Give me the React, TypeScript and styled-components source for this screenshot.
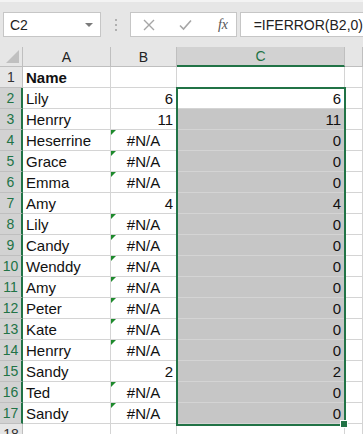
import React from "react";
import styled, { createGlobalStyle } from "styled-components";

const GlobalStyle = createGlobalStyle`
  html, body {
    margin: 0;
    padding: 0;
    background: #ffffff;
    overflow: hidden;
  }
  body {
    font-family: "Liberation Sans", Arial, sans-serif;
  }
`;

const green = "#217346";

const Window = styled.div`
  width: 363px;
  height: 434px;
  overflow: hidden;
  background: #ffffff;
`;

const FormulaBar = styled.div`
  height: 47px;
  box-sizing: border-box;
  background: #e6e6e6;
  border-top: 2px solid #f3f3f3;
  display: flex;
  align-items: flex-start;
  padding: 10px 0 0 3px;
`;

const NameBox = styled.div`
  width: 102px;
  height: 25px;
  box-sizing: border-box;
  background: #fff;
  border: 1px solid #c6c6c6;
  display: flex;
  align-items: center;
  justify-content: space-between;
  padding: 0 7px 0 6px;
  font-size: 14px;
  color: #222;
`;

const DropArrow = styled.span`
  width: 0;
  height: 0;
  border-left: 4px solid transparent;
  border-right: 4px solid transparent;
  border-top: 4px solid #7a7a7a;
`;

const Grip = styled.div`
  width: 30px;
  height: 25px;
  display: flex;
  flex-direction: column;
  align-items: center;
  justify-content: center;
  gap: 3px;
`;

const GripDot = styled.span`
  width: 2px;
  height: 2px;
  background: #b0b0b0;
`;

const IconBox = styled.div`
  width: 111px;
  height: 25px;
  box-sizing: border-box;
  background: #fff;
  border: 1px solid #c6c6c6;
  display: flex;
  align-items: center;
  padding-left: 12px;
  gap: 24px;
`;

const Fx = styled.span`
  font-family: "Liberation Serif", "Times New Roman", serif;
  font-style: italic;
  font-size: 14px;
  color: #555;
  margin-left: 2px;
`;

const FormulaInput = styled.div`
  flex: 1;
  height: 25px;
  margin-left: 3px;
  box-sizing: border-box;
  background: #fff;
  border: 1px solid #c6c6c6;
  border-right: none;
  display: flex;
  align-items: center;
  padding-left: 13px;
  font-size: 14px;
  color: #222;
  white-space: nowrap;
`;

const Sheet = styled.div`
  position: relative;
  display: grid;
  grid-template-columns: 23px 88px 66px 168px 1fr;
  grid-auto-rows: 21px;
  grid-template-rows: 20px;
`;

const Corner = styled.div`
  background: #e6e6e6;
  border-right: 1px solid #bfbfbf;
  border-bottom: 1px solid #bfbfbf;
  box-sizing: border-box;
  position: relative;
  &::after {
    content: "";
    position: absolute;
    right: 3px;
    bottom: 3px;
    border-left: 13px solid transparent;
    border-bottom: 13px solid #c0c0c0;
  }
`;

const ColHead = styled.div<{ $selected?: boolean }>`
  box-sizing: border-box;
  background: ${(p) => (p.$selected ? "#d2d2d2" : "#e6e6e6")};
  border-right: 1px solid #bfbfbf;
  border-bottom: ${(p) => (p.$selected ? `2px solid ${green}` : "1px solid #bfbfbf")};
  color: ${(p) => (p.$selected ? green : "#222")};
  font-size: 14px;
  display: flex;
  align-items: center;
  justify-content: center;
`;

const RowHead = styled.div<{ $selected?: boolean }>`
  box-sizing: border-box;
  background: ${(p) => (p.$selected ? "#d2d2d2" : "#e6e6e6")};
  border-right: ${(p) => (p.$selected ? `2px solid ${green}` : "1px solid #bfbfbf")};
  border-bottom: 1px solid #bfbfbf;
  color: ${(p) => (p.$selected ? green : "#333")};
  font-size: 14px;
  display: flex;
  align-items: center;
  justify-content: center;
`;

const Cell = styled.div<{ $align?: "left" | "right" | "center"; $fill?: boolean; $bold?: boolean; $flag?: boolean }>`
  position: relative;
  box-sizing: border-box;
  border-right: 1px solid #d4d4d4;
  border-bottom: 1px solid #d4d4d4;
  background: ${(p) => (p.$fill ? "#c6c6c6" : "#fff")};
  font-size: 15px;
  font-weight: ${(p) => (p.$bold ? 700 : 400)};
  color: #111;
  display: flex;
  align-items: center;
  justify-content: ${(p) =>
    p.$align === "right" ? "flex-end" : p.$align === "center" ? "center" : "flex-start"};
  padding: 0 3px 0 3px;
  white-space: nowrap;
  overflow: hidden;
  &::before {
    content: "";
    display: ${(p) => (p.$flag ? "block" : "none")};
    position: absolute;
    left: 0;
    top: 0;
    border-top: 5px solid #1e8a2d;
    border-right: 5px solid transparent;
  }
`;

/* selection rectangle over C2:C17 */
const Selection = styled.div`
  position: absolute;
  left: 176px;
  top: 40px;
  width: 170px;
  height: 339px;
  box-sizing: border-box;
  border: 2px solid ${green};
  pointer-events: none;
`;

const Handle = styled.div`
  position: absolute;
  left: 340px;
  top: 373px;
  width: 6px;
  height: 6px;
  background: ${green};
  border: 1px solid #fff;
`;

type Row = { name: string; b: string; c: string };

const rows: Row[] = [
  { name: "Lily", b: "6", c: "6" },
  { name: "Henrry", b: "11", c: "11" },
  { name: "Heserrine", b: "#N/A", c: "0" },
  { name: "Grace", b: "#N/A", c: "0" },
  { name: "Emma", b: "#N/A", c: "0" },
  { name: "Amy", b: "4", c: "4" },
  { name: "Lily", b: "#N/A", c: "0" },
  { name: "Candy", b: "#N/A", c: "0" },
  { name: "Wenddy", b: "#N/A", c: "0" },
  { name: "Amy", b: "#N/A", c: "0" },
  { name: "Peter", b: "#N/A", c: "0" },
  { name: "Kate", b: "#N/A", c: "0" },
  { name: "Henrry", b: "#N/A", c: "0" },
  { name: "Sandy", b: "2", c: "2" },
  { name: "Ted", b: "#N/A", c: "0" },
  { name: "Sandy", b: "#N/A", c: "0" },
];

const CrossIcon = () => (
  <svg width="12" height="12" viewBox="0 0 12 12">
    <path d="M1 1 L11 11 M11 1 L1 11" stroke="#a6a6a6" strokeWidth="1.4" fill="none" />
  </svg>
);

const CheckIcon = () => (
  <svg width="13" height="12" viewBox="0 0 13 12">
    <path d="M1 6.5 L4.5 10 L12 1.5" stroke="#a6a6a6" strokeWidth="1.6" fill="none" />
  </svg>
);

export default function App() {
  return (
    <Window>
      <GlobalStyle />
      <FormulaBar>
        <NameBox>
          C2
          <DropArrow />
        </NameBox>
        <Grip>
          <GripDot />
          <GripDot />
          <GripDot />
        </Grip>
        <IconBox>
          <CrossIcon />
          <CheckIcon />
          <Fx>fx</Fx>
        </IconBox>
        <FormulaInput>=IFERROR(B2,0)</FormulaInput>
      </FormulaBar>
      <Sheet>
        <Corner />
        <ColHead>A</ColHead>
        <ColHead>B</ColHead>
        <ColHead $selected>C</ColHead>
        <ColHead />

        <RowHead>1</RowHead>
        <Cell $bold>Name</Cell>
        <Cell />
        <Cell />
        <Cell />

        {rows.map((r, i) => {
          const isNA = r.b === "#N/A";
          return (
            <React.Fragment key={i}>
              <RowHead $selected>{i + 2}</RowHead>
              <Cell>{r.name}</Cell>
              <Cell $align={isNA ? "center" : "right"} $flag={isNA}>
                {r.b}
              </Cell>
              <Cell $align="right" $fill={i > 0}>
                {r.c}
              </Cell>
              <Cell />
            </React.Fragment>
          );
        })}

        <RowHead>18</RowHead>
        <Cell />
        <Cell />
        <Cell />
        <Cell />

        <Selection />
        <Handle />
      </Sheet>
    </Window>
  );
}
